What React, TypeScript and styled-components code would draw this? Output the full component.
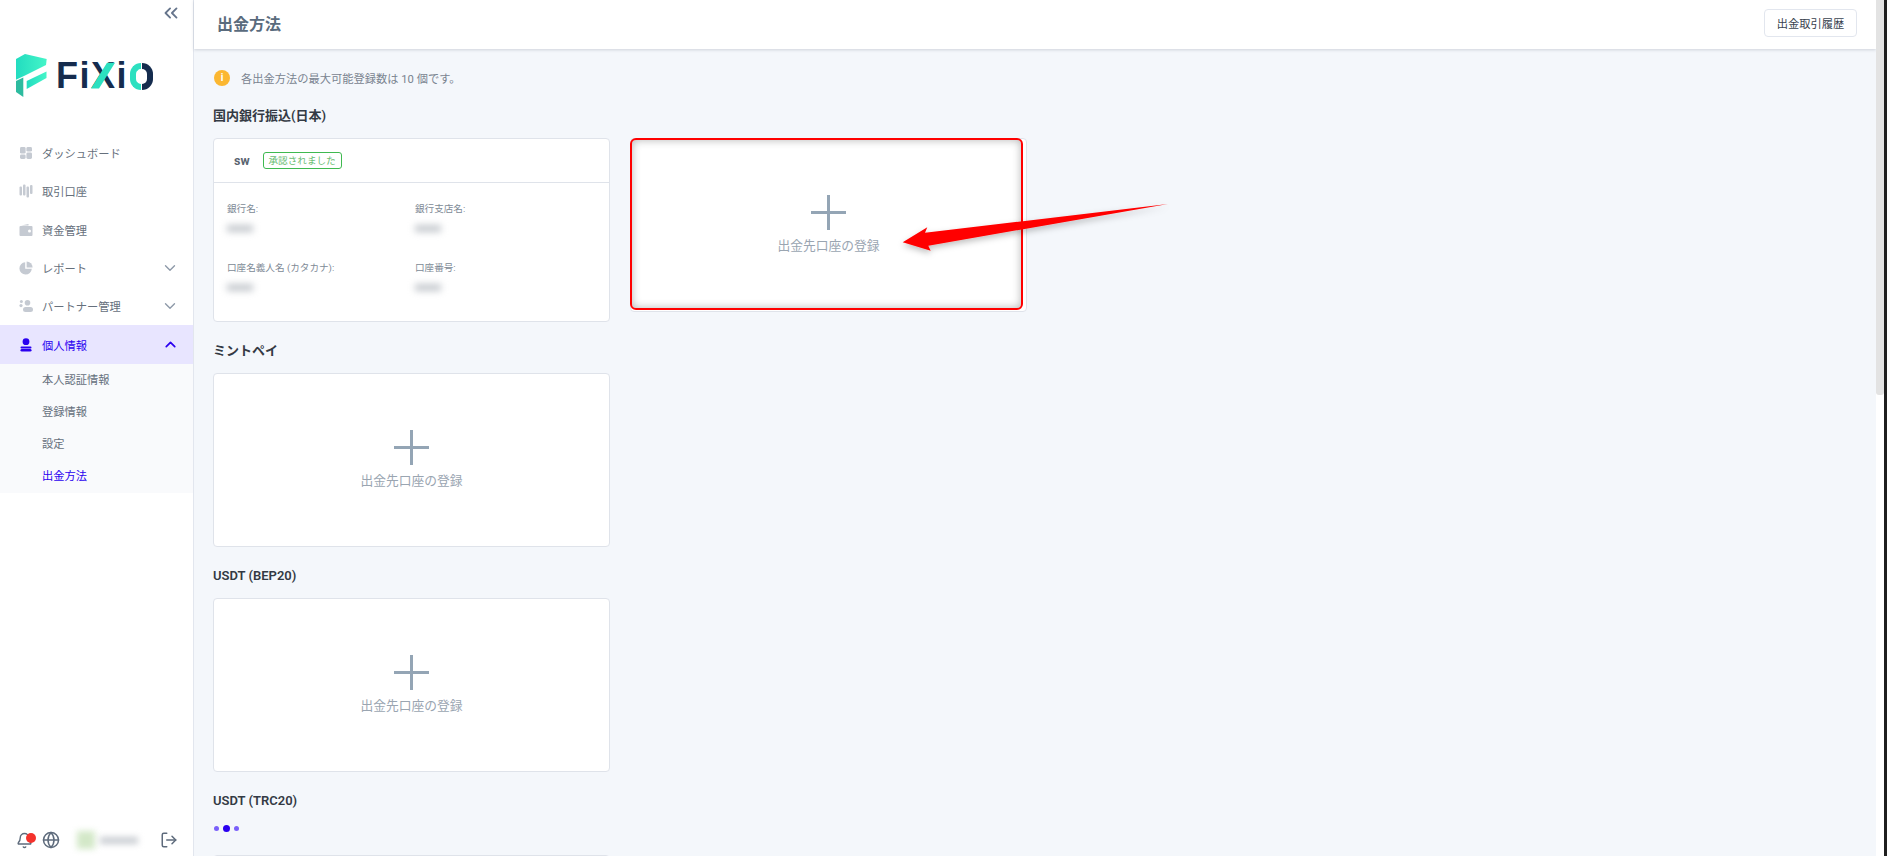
import { createGlobalStyle, styled } from "styled-components";
import { ChevronDown, ChevronUp, ChevronsLeft, Globe, LogOut, Bell } from "lucide-react";

const navItems = [
  { key: "dash", label: "ダッシュボード" },
  { key: "acct", label: "取引口座" },
  { key: "fund", label: "資金管理" },
  { key: "report", label: "レポート", chevron: true },
  { key: "partner", label: "パートナー管理", chevron: true },
];

const subItems = ["本人認証情報", "登録情報", "設定", "出金方法"];

function NavIcon({ name }: { name: string }) {
  if (name === "dash") {
    return (
      <svg width="14" height="14" viewBox="0 0 14 14" fill="#c5cad2">
        <rect x="1" y="1" width="5.6" height="6.6" rx="1.4" />
        <rect x="7.4" y="1" width="5.6" height="4.6" rx="1.4" />
        <rect x="1" y="8.4" width="5.6" height="4.6" rx="1.4" />
        <rect x="7.4" y="6.4" width="5.6" height="6.6" rx="1.4" />
      </svg>
    );
  }
  if (name === "acct") {
    return (
      <svg width="14" height="14" viewBox="0 0 14 14" fill="#c5cad2">
        <rect x="0.5" y="2.5" width="2.5" height="9" rx="1" />
        <rect x="4" y="0.5" width="2.5" height="11" rx="1" />
        <rect x="7.5" y="2.5" width="2.5" height="11" rx="1" />
        <rect x="11" y="1" width="2.5" height="9" rx="1" />
      </svg>
    );
  }
  if (name === "fund") {
    return (
      <svg width="14" height="14" viewBox="0 0 14 14">
        <path fill="#c5cad2" d="M1.5 3h11a1 1 0 0 1 1 1v8a1 1 0 0 1-1 1h-11a1 1 0 0 1-1-1V4a1 1 0 0 1 1-1z" />
        <path fill="#c5cad2" d="M2 2.4 9.5 1v1.4z" />
        <circle cx="10.5" cy="8" r="1.5" fill="#fff" />
      </svg>
    );
  }
  if (name === "report") {
    return (
      <svg width="14" height="14" viewBox="0 0 14 14" fill="#c5cad2">
        <path d="M6.2 1.2v6.6h6.6A6.2 6.2 0 1 1 6.2 1.2z" />
        <path d="M7.6 0.4a6 6 0 0 1 6 6h-6z" />
      </svg>
    );
  }
  if (name === "partner") {
    return (
      <svg width="14" height="14" viewBox="0 0 14 14" fill="#c5cad2">
        <circle cx="8.5" cy="3.8" r="2.8" />
        <circle cx="2.4" cy="2.4" r="1.5" />
        <circle cx="2" cy="6.6" r="1.6" />
        <rect x="4" y="8" width="10" height="5" rx="2.5" />
      </svg>
    );
  }
  return (
    <svg width="14" height="14" viewBox="0 0 14 14" fill="#2a00f0">
      <circle cx="7" cy="3.7" r="3.4" />
      <rect x="1.5" y="8.4" width="11" height="2.2" rx="1" />
      <rect x="1.5" y="11" width="11" height="2.6" rx="1.3" />
    </svg>
  );
}

function Logo() {
  return (
    <LogoWrap>
      <svg width="31" height="44" viewBox="0 0 31 44">
        <defs>
          <linearGradient id="logoA" x1="0" y1="0" x2="1" y2="0">
            <stop offset="0" stopColor="#22dcc0" />
            <stop offset="1" stopColor="#45f5c8" />
          </linearGradient>
        </defs>
        <path fill="url(#logoA)" d="M0 5 9 0l21.7 5-.7 6L9 21.5 0 25.7z" />
        <path fill="url(#logoA)" d="M10.7 27 30.5 17.5V24L10.7 35z" />
        <path fill="#2dbb9f" d="M0 27l7.3-3.5V43L0 38z" />
      </svg>
      <LogoText>
        Fi
        <LogoX>X</LogoX>
        i
        <LogoO>
          <i />
          <b />
        </LogoO>
      </LogoText>
    </LogoWrap>
  );
}

function AddCard({ highlighted }: { highlighted?: boolean }) {
  return (
    <Card $h={174} $center>
      <svg width="35" height="35" viewBox="0 0 35 35" stroke="#94a5b5" strokeWidth="3">
        <line x1="17.5" y1="0" x2="17.5" y2="35" />
        <line x1="0" y1="17.5" x2="35" y2="17.5" />
      </svg>
      <AddLabel>出金先口座の登録</AddLabel>
      {highlighted && <Highlight />}
    </Card>
  );
}

function Arrow() {
  return (
    <ArrowSvg width="290" height="70" viewBox="0 0 290 70">
      <defs>
        <filter id="arrowShadow" x="-10%" y="-30%" width="120%" height="180%">
          <feDropShadow dx="0" dy="3" stdDeviation="3" floodColor="#000" floodOpacity="0.25" />
        </filter>
      </defs>
      <path
        fill="#ff0000"
        filter="url(#arrowShadow)"
        d="M274 6 31 34.7 33.3 29.3 8.7 44.3 36.7 52.7 34.3 47.7z"
      />
    </ArrowSvg>
  );
}

export default function App() {
  return (
    <Page>
      <GlobalStyle />
      <Sidebar>
        <Collapse>
          <ChevronsLeft size={22} color="#66758c" strokeWidth={2} />
        </Collapse>
        <Logo />
        <Nav>
          {navItems.map((item) => (
            <NavRow key={item.key}>
              <NavIcon name={item.key} />
              <NavLabel>{item.label}</NavLabel>
              {item.chevron && <ChevronDown size={18} color="#8d99a8" strokeWidth={1.8} />}
            </NavRow>
          ))}
          <NavRow $active>
            <NavIcon name="user" />
            <NavLabel>個人情報</NavLabel>
            <ChevronUp size={17} color="#2a00f0" strokeWidth={2.4} />
          </NavRow>
          <SubMenu>
            {subItems.map((s, i) => (
              <SubRow key={s} $active={i === 3}>
                {s}
              </SubRow>
            ))}
          </SubMenu>
        </Nav>
        <Footer>
          <BellWrap>
            <Bell size={17} color="#5e6b7c" />
            <RedDot />
          </BellWrap>
          <Globe size={18} color="#5e6b7c" />
          <BlurUser>
            <BlurAvatar />
            <BlurName />
          </BlurUser>
          <LogOut size={18} color="#5e6b7c" />
        </Footer>
      </Sidebar>

      <Main>
        <Header>
          <Title>出金方法</Title>
          <HistoryButton>出金取引履歴</HistoryButton>
        </Header>
        <Content>
          <Notice>
            <InfoDot>i</InfoDot>
            各出金方法の最大可能登録数は 10 個です。
          </Notice>

          <SectionTitle>国内銀行振込(日本)</SectionTitle>
          <CardRow>
            <Card $h={184}>
              <CardHead>
                <Holder>sw</Holder>
                <Approved>承認されました</Approved>
              </CardHead>
              <CardBody>
                <Field>
                  <FieldLabel>銀行名:</FieldLabel>
                  <Blur />
                </Field>
                <Field>
                  <FieldLabel>銀行支店名:</FieldLabel>
                  <Blur />
                </Field>
                <Field>
                  <FieldLabel>口座名義人名 (カタカナ):</FieldLabel>
                  <Blur />
                </Field>
                <Field>
                  <FieldLabel>口座番号:</FieldLabel>
                  <Blur />
                </Field>
              </CardBody>
            </Card>
            <AddCard highlighted />
          </CardRow>

          <SectionTitle>ミントペイ</SectionTitle>
          <CardRow>
            <AddCard />
          </CardRow>

          <SectionTitle>USDT (BEP20)</SectionTitle>
          <CardRow>
            <AddCard />
          </CardRow>

          <SectionTitle>USDT (TRC20)</SectionTitle>
          <Dots>
            <Dot />
            <Dot $big />
            <Dot />
          </Dots>
          <Card $h={174} />
        </Content>
        <Arrow />
      </Main>
      <ScrollTrack>
        <ScrollThumb />
      </ScrollTrack>
    </Page>
  );
}

const GlobalStyle = createGlobalStyle`
  html, body {
    margin: 0;
    height: 100%;
    overflow: hidden;
  }
  body {
    font-family: Roboto, "Noto Sans CJK JP", sans-serif;
    background: #f4f7fb;
  }
  * {
    box-sizing: border-box;
  }
`;

const Page = styled.div`
  display: flex;
  height: 856px;
  overflow: hidden;
`;

const Sidebar = styled.aside`
  position: relative;
  flex: 0 0 194px;
  display: flex;
  flex-direction: column;
  background: #fff;
  border-right: 1px solid #e2e6ee;
`;

const Collapse = styled.div`
  display: flex;
  justify-content: flex-end;
  padding: 2px 11px 0 0;
  height: 21px;
`;

const LogoWrap = styled.div`
  display: flex;
  align-items: center;
  gap: 9px;
  height: 44px;
  margin: 33px 0 0 16px;
`;

const LogoText = styled.div`
  display: flex;
  align-items: center;
  font-family: "Liberation Sans", sans-serif;
  font-size: 36px;
  font-weight: 700;
  letter-spacing: 1.5px;
  color: #152c4e;
  line-height: 1;
`;

const LogoX = styled.span`
  position: relative;
  &::after {
    content: "";
    position: absolute;
    inset: 0;
    background: #2ce0c0;
    clip-path: polygon(0 30.5px, 8px 30.5px, 24px 4.7px, 16px 4.7px);
  }
`;

const LogoO = styled.div`
  display: flex;
  gap: 1px;
  margin-left: 2px;
  i {
    display: block;
    width: 11px;
    height: 27px;
    border-radius: 14px 0 0 14px;
    border: 6px solid #2ce0c0;
    border-right: 0;
  }
  b {
    display: block;
    width: 11px;
    height: 27px;
    border-radius: 0 14px 14px 0;
    border: 6px solid #152c4e;
    border-left: 0;
  }
`;

const Nav = styled.nav`
  margin-top: 36px;
  display: flex;
  flex-direction: column;
`;

const NavRow = styled.div<{ $active?: boolean }>`
  display: flex;
  align-items: center;
  height: 38.3px;
  padding: 0 14px 0 19px;
  gap: 8px;
  font-size: 11.25px;
  color: ${(p) => (p.$active ? "#2a00f0" : "#66707c")};
  background: ${(p) => (p.$active ? "#e8e5ff" : "transparent")};
`;

const NavLabel = styled.span`
  flex: 1;
  margin-left: 1px;
`;

const SubMenu = styled.div`
  background: #f9fafc;
  padding: 1px 0 0 42px;
  display: flex;
  flex-direction: column;
`;

const SubRow = styled.div<{ $active?: boolean }>`
  height: 32px;
  line-height: 32px;
  font-size: 11.25px;
  color: ${(p) => (p.$active ? "#2a00f0" : "#66707c")};
`;

const Footer = styled.div`
  position: absolute;
  left: 16px;
  right: 15px;
  bottom: 4px;
  display: flex;
  align-items: center;
  height: 24px;
`;

const BellWrap = styled.div`
  position: relative;
  width: 26px;
  display: flex;
`;

const RedDot = styled.span`
  position: absolute;
  left: 10px;
  top: 1px;
  width: 10px;
  height: 10px;
  border-radius: 50%;
  background: #f4322c;
`;

const BlurUser = styled.div`
  flex: 1;
  display: flex;
  align-items: center;
  gap: 5px;
  margin-left: 17px;
  height: 20px;
`;

const BlurAvatar = styled.div`
  width: 18px;
  height: 18px;
  background: #d3e8c8;
  filter: blur(3px);
`;

const BlurName = styled.div`
  width: 38px;
  height: 7px;
  background: #c9cdd2;
  filter: blur(3px);
`;

const Main = styled.main`
  position: relative;
  flex: 1;
  min-width: 0;
  display: flex;
  flex-direction: column;
`;

const Header = styled.header`
  flex: 0 0 49px;
  display: flex;
  align-items: center;
  justify-content: space-between;
  padding: 0 19px 3px 23px;
  background: #fff;
  box-shadow: 0 1px 3px rgba(40, 50, 70, 0.18);
  position: relative;
`;

const Title = styled.h1`
  margin: 0;
  font-size: 16px;
  font-weight: 700;
  color: #5a6b7d;
`;

const HistoryButton = styled.button`
  width: 93px;
  height: 28px;
  padding: 0;
  border: 1px solid #e2e6ee;
  border-radius: 4px;
  background: #fff;
  font: 400 11.25px Roboto, "Noto Sans CJK JP", sans-serif;
  color: #3a4350;
`;

const Content = styled.div`
  padding: 20px 0 0 19px;
`;

const Notice = styled.div`
  display: flex;
  align-items: center;
  height: 18px;
  gap: 11px;
  padding-left: 1px;
  font-size: 11.25px;
  color: #7a8490;
`;

const InfoDot = styled.span`
  width: 16px;
  height: 16px;
  border-radius: 50%;
  background: #fbb731;
  color: #fff;
  font-size: 10px;
  font-weight: 700;
  text-align: center;
  line-height: 16px;
`;

const SectionTitle = styled.h2`
  margin: 21px 0 14px;
  font-size: 13px;
  line-height: 16px;
  font-weight: 600;
  color: #333a44;
`;

const CardRow = styled.div`
  display: flex;
  gap: 20px;
`;

const Card = styled.div<{ $h: number; $center?: boolean }>`
  position: relative;
  width: 397px;
  height: ${(p) => p.$h}px;
  background: #fff;
  border: 1px solid #dfe3ea;
  border-radius: 4px;
  display: flex;
  flex-direction: column;
  align-items: ${(p) => (p.$center ? "center" : "stretch")};
  justify-content: ${(p) => (p.$center ? "center" : "flex-start")};
`;

const AddLabel = styled.div`
  margin-top: 6px;
  font-size: 12.75px;
  line-height: 19px;
  color: #9aa5b1;
`;

const Highlight = styled.div`
  position: absolute;
  inset: -1px 3px 1px -1px;
  border: 2px solid #f00;
  border-radius: 6px;
  box-shadow: inset 0 0 8px rgba(0, 0, 0, 0.3);
`;

const CardHead = styled.div`
  display: flex;
  align-items: center;
  height: 44px;
  padding: 0 20px;
  gap: 13px;
  border-bottom: 1px solid #dfe3ea;
`;

const Holder = styled.span`
  font-size: 12.5px;
  font-weight: 700;
  color: #5a6470;
  line-height: 16px;
`;

const Approved = styled.span`
  width: 79px;
  height: 17px;
  border: 1px solid #3fb950;
  border-radius: 3px;
  text-align: center;
  line-height: 15px;
  font-size: 9.6px;
  color: #6bbd73;
`;

const CardBody = styled.div`
  display: grid;
  grid-template-columns: 188px 1fr;
  grid-auto-rows: 59px;
  padding: 19px 0 0 13px;
`;

const Field = styled.div`
  display: flex;
  flex-direction: column;
  gap: 9px;
`;

const FieldLabel = styled.span`
  font-size: 9.6px;
  line-height: 14px;
  color: #808a96;
`;

const Blur = styled.div`
  width: 26px;
  height: 7px;
  background: #c4c8cd;
  filter: blur(3.5px);
`;

const Dots = styled.div`
  display: flex;
  align-items: center;
  gap: 4px;
  height: 10px;
  margin: 1px 0 22px 1px;
`;

const Dot = styled.span<{ $big?: boolean }>`
  width: ${(p) => (p.$big ? 7 : 5)}px;
  height: ${(p) => (p.$big ? 7 : 5)}px;
  border-radius: 50%;
  background: ${(p) => (p.$big ? "#2a00f0" : "#7a60fa")};
`;

const ArrowSvg = styled.svg`
  position: absolute;
  left: 700px;
  top: 198px;
`;

const ScrollTrack = styled.div`
  flex: 0 0 11px;
  background: #fff;
  border-right: 3px solid #1f1f1f;
  position: relative;
`;

const ScrollThumb = styled.div`
  height: 395px;
  background: #e3e3e3;
  border-radius: 0 0 3px 3px;
`;
